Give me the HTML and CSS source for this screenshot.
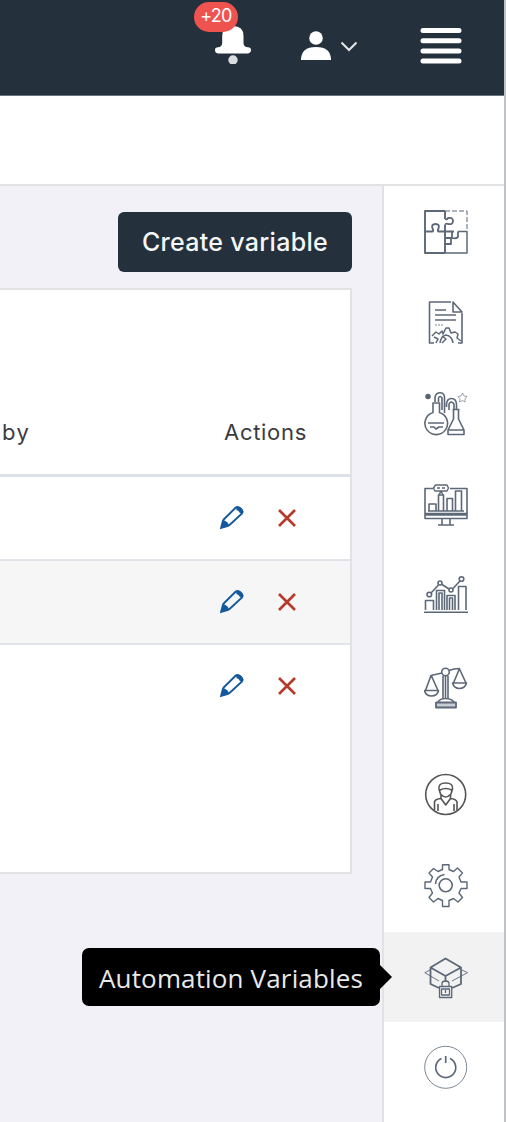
FILE: index.html
```
<!DOCTYPE html>
<html lang="en">
<head>
<meta charset="utf-8">
<title>Automation Variables</title>
<link rel="stylesheet" href="styles.css">
</head>
<body>
<svg class="defs" width="0" height="0">
  <symbol id="pencil" viewBox="0 0 26 26"><path d="M4.200 15 16.500 2.800Q18 1.700 19.500 2.200 23 3.500 23.600 7L23 8.500 10 20.500" fill="none" stroke="#14599b" stroke-width="1.900"/><path d="M17 2.200Q22 .8 24.300 6.500L22.500 9 20.500 7.500Q20 5.500 17.500 5ZM3.300 14.500 6.500 16Q9 17 10.500 21L9.500 21.800.8 24.300Z" fill="#14599b"/></symbol>
  <symbol id="cross" viewBox="0 0 20 20"><path d="M2 2 18 18M18 2 2 18" fill="none" stroke="#b63b2c" stroke-width="2.700"/></symbol>
</svg>
<div class="app">
  <header class="topbar">
    <div class="bell">
      <svg width="38" height="42" viewBox="0 0 38 42"><path d="M1 28Q1 25.500 4 25.300 8 25 8.200 21V14Q8.500 4 19 4T29.500 14V21Q29.500 25 34 25.300 37 25.500 37 28T34 31.500H4Q1 31 1 28Z" fill="#fff"/><circle cx="19" cy="38" r="4.700" fill="#dcdde1"/></svg>
      <span class="badge">+20</span>
    </div>
    <div class="account">
      <svg width="32" height="32" viewBox="0 0 32 32"><circle cx="16" cy="8" r="6.800" fill="#fff"/><path d="M1 30Q1 17 16 17T31 30Z" fill="#fff"/></svg>
      <svg width="18" height="12" viewBox="0 0 18 12"><path d="M1.500 2.500 9 10 16.500 2.500" fill="none" stroke="#e4e6e8" stroke-width="2"/></svg>
    </div>
    <svg class="menu" width="42" height="38" viewBox="0 0 42 38"><path d="M3 3.500H39M3 13.700H39M3 23.900H39M3 34.100H39" stroke="#fff" stroke-width="5" stroke-linecap="round"/></svg>
  </header>
  <div class="subbar"></div>
  <div class="body">
    <main class="main">
      <button class="create">Create variable</button>
      <section class="card">
        <div class="row head"><span class="by">by</span><span class="actions-title">Actions</span></div>
        <div class="row"><svg class="edit"><use href="#pencil"/></svg><svg class="remove"><use href="#cross"/></svg></div>
        <div class="row striped"><svg class="edit"><use href="#pencil"/></svg><svg class="remove"><use href="#cross"/></svg></div>
        <div class="row last"><svg class="edit"><use href="#pencil"/></svg><svg class="remove"><use href="#cross"/></svg></div>
      </section>
    </main>
    <nav class="side">
      <a class="item"><svg class="icon" viewBox="0 0 44 44"><path d="M21 1H1V43H21M1 21.500H8Q10 21.500 8.500 18.500 7 14 11.500 14 16 14 14.500 18.500 13 21.500 15 21.500H30M21 1V9M21 15V43" stroke-width="1.900"/><path d="M21 43H43V21.500H34" stroke-width="1.500"/><path d="M21 1H43V21" stroke-dasharray="5 2" stroke-width="1"/><path d="M21 9Q23 10 24 8 29 7 29 11T24 14Q22 13 21 15M21 28H28V22M34 21.500V27Q32 29 28 28M21 34H27V28" stroke-width="1.800"/></svg></a>
      <a class="item"><svg class="icon" viewBox="0 0 44 44"><path d="M27 1H5.500V42H10M29 1 38 11H29ZM38 12V42H34M11 9H22M11 14H32M11 19H32"/><path d="M11 24H20" stroke-width=".8" stroke-dasharray="2 1"/><path d="M8 35 12 31 15 33 18 30 19 33 22 27H25L27 32 31 31 34 33 33 37 37 40M12 42 14 38 10 36M16 42Q17 35 22 34 28 35 29 42M18 35 22 38 18 42" stroke-width="1.500"/></svg></a>
      <a class="item"><svg class="icon" viewBox="0 0 44 44"><path d="M9 11H15.500V20.500A11.300 11.300 0 1 1 9 20.500ZM4 31H20M6 35H10L12 37 15 35H19M11 10V5Q12 .8 16 .8T20.500 5V21M14.500 10V6Q16 3 18 6V18M22.500 15V12Q23 6.500 27.500 6.500T32.500 12V17M25 18V12Q27 8 30 12V17M28.500 17.500H35.500M29.500 18V27L24 38V42.500H40V38L34.500 27V18M24 38H40"/><circle cx="4" cy="4.500" r="2" fill="#536071"/><path d="M38.500 1 40 4 43 4.500 41 7 41 10 38.500 8.500 35.500 10 36 7 34 4.500 37 4Z" stroke-width=".6"/></svg></a>
      <a class="item"><svg class="icon" viewBox="0 0 44 44"><path d="M9 5.500H1V35.500H43V5.500H26M1 30.500H43M1 32H43M4 28H40M5 28V21H12V28M14.500 28V12H19.500V28M23 28V15.500H28.500V28M31.500 28V8H37.500V28M18 35.500V42M26 35.500V42M14 42H30"/><path d="M11.500 2H23L24.500 5 23 8H11L9.500 5ZM13 5H16M18 5H21M15 12 17 8 19 12" stroke-width="1.400"/></svg></a>
      <a class="item"><svg class="icon" viewBox="0 0 44 44"><path d="M0 38.300H44M1.500 36V26.500H9.500V36M12.500 36V16.500H20.500V36M15 36V19H18V36M23 36V21.500H31V36M25.500 36V24H28.500V36M34.500 36V12.500H42V36M7 19 14.500 11M18 10.500 25 15M29 14.500 36 7"/><circle cx="5.300" cy="20.500" r="2.300"/><circle cx="16" cy="9" r="2"/><circle cx="27" cy="16" r="2"/><circle cx="37.500" cy="5" r="2.300"/></svg></a>
      <a class="item"><svg class="icon" viewBox="0 0 44 44"><circle cx="21.500" cy="7" r="3.800"/><path d="M18 8 7 10.500 1.500 25.500H14L7.500 11M25 5.500 30 4 35.500 3.500 29.500 18H42L35.500 4M.5 25.500H14.500Q13.500 31 7.500 31T.5 25.500ZM28.500 18H42.500Q41 23.500 35.500 23.500T28.500 18ZM19 11V34M21.500 11V34M24 11V34M14 37Q16 33.500 21.500 33.500T30 37"/><path d="M12 37.500H32V42.500H12Z" fill="#c6cdd3" stroke-width="1.800"/></svg></a>
      <a class="item spaced"><svg class="icon dark" viewBox="0 0 44 44"><circle cx="21.700" cy="21.500" r="20"/><path d="M10.500 37V29Q11 26 17 25.500V22M26.500 22V25.500Q32 26 33 29V37M17 25.500 21.700 32 26.500 25.500M15 16Q14 10 21.700 10T28.500 16L27 21Q24 24 21.700 24T16.500 21ZM16 17Q22 14 27.500 17M14 31V38M30 31V38"/></svg></a>
      <a class="item"><svg class="icon" viewBox="0 0 44 44"><path d="M18.500.8H25V5.500L29.500 7.500 33.500 4 38.500 9 35 13 37 18H43V24.500H37L35 29 38.500 33.500 34 38 29.500 34.500 25 36.500V42.500H18.500V36.500L14 34.500 9.500 38 5 33.500 8.500 29 6.500 24.500H1V18H6.500L8.500 13 5 9 9.500 4.500 14 7.500 18.500 5.500Z" stroke-width="1.400"/><circle cx="21.700" cy="21.300" r="6.500"/><path d="M11.500 20Q12 12 20.500 10.500"/></svg></a>
      <a class="item active"><svg class="icon" viewBox="0 0 44 44"><path d="M21.500 3.500 37 12.500 21.500 21 6.500 12.500ZM6.500 12.500V29L15 33M37 12.500V29L28 33M21.500 21V27" stroke-width="1.800"/><path d="M6 15 .8 17.700 15 26M38 15 43.500 17.700 28 26" stroke-width=".9"/><path d="M18 31V28Q18.500 26 21.500 26T25 28V31M15.500 31.500H27.700V42.500H15.500ZM17.500 34H25.500V40H17.500ZM21.500 35V38" stroke-width="1.300"/></svg>
        <span class="tooltip">Automation Variables</span></a>
      <a class="item"><svg class="icon" viewBox="0 0 44 44"><circle cx="21.700" cy="22.300" r="21" stroke-width=".8"/><path d="M17.500 13.500A10 10 0 1 0 26 13.500M21.700 11V18" stroke-width="1.700"/></svg></a>
    </nav>
  </div>
</div>
</body>
</html>
```
FILE: styles.css
```
* { box-sizing: border-box; }
body { margin: 0; font-family: Inter, "Open Sans", sans-serif; background: #fff; }
.defs { display: block; height: 0; }
.app { width: 506px; height: 1122px; display: flex; flex-direction: column; border-right: 2px solid #c1c2c4; overflow: hidden; }
.topbar { height: 96px; flex: none; background: #24313d; display: flex; align-items: flex-start; padding-left: 214px; border-bottom: 1px solid #67717a; }
.bell { position: relative; padding-top: 22px; width: 38px; }
.bell svg, .account svg, .menu { display: block; }
.badge { position: absolute; left: -20px; top: 2px; width: 44px; height: 30px; border-radius: 15px; background: #ef5350; color: #fff; font-size: 18px; font-weight: 400; line-height: 27px; text-align: center; letter-spacing: -.7px; }
.account { display: flex; align-items: center; gap: 8px; padding-top: 30px; margin-left: 48px; }
.menu { margin: 27px 0 0 62px; }
.subbar { height: 90px; flex: none; border-bottom: 2px solid #e2e2e5; }
.body { flex: 1; display: flex; min-height: 0; }
.main { width: 382px; flex: none; background: #f2f1f7; display: flex; flex-direction: column; padding-top: 26px; }
.create { align-self: flex-end; width: 234px; height: 60px; margin-right: 30px; border: 0; border-radius: 6px; background: #24313d; color: #f5f6f7; font: 500 25px Inter, sans-serif; letter-spacing: .3px; padding: 0 0 1px; white-space: nowrap; }
.card { margin-top: 16px; width: 352px; height: 586px; background: #fff; border: 2px solid #e2e2e4; border-left: 0; }
.row { height: 84px; border-bottom: 2px solid #e1e5e9; display: flex; align-items: center; padding-left: 219px; }
.head { height: 187px; padding: 127px 43px 0 2px; border-bottom: 3px solid #dee2e8; align-items: flex-start; justify-content: space-between; font-size: 22px; line-height: 30px; color: #3b3c42; }
.by { letter-spacing: 1.4px; }
.actions-title { letter-spacing: .7px; }
.striped { background: #f6f6f6; }
.last { border-color: transparent; }
.edit { width: 26px; height: 26px; margin-right: 32px; }
.remove { width: 20px; height: 20px; }
.side { width: 122px; flex: none; background: #fff; border-left: 2px solid #e2e2e5; display: flex; flex-direction: column; padding-top: 1px; }
.item { height: 91px; flex: none; display: flex; align-items: center; padding: 0 0 1px 40px; position: relative; }
.spaced { margin-top: 17px; }
.active { height: 90px; background: #f2f2f2; padding-bottom: 0; }
.icon { width: 44px; height: 44px; fill: none; stroke: #5c6877; stroke-width: 1.6; stroke-linejoin: round; }
.dark { stroke: #555; }
.tooltip { position: absolute; right: 124px; top: 16px; width: 298px; height: 58px; border-radius: 7px; background: #000; color: #e9e9e9; font: 26px/60px "Open Sans", sans-serif; text-align: center; white-space: nowrap; letter-spacing: .15px; }
.tooltip::after { content: ""; position: absolute; left: 298px; top: 17px; border: 12px solid transparent; border-left-color: #000; border-right: 0; }
```
